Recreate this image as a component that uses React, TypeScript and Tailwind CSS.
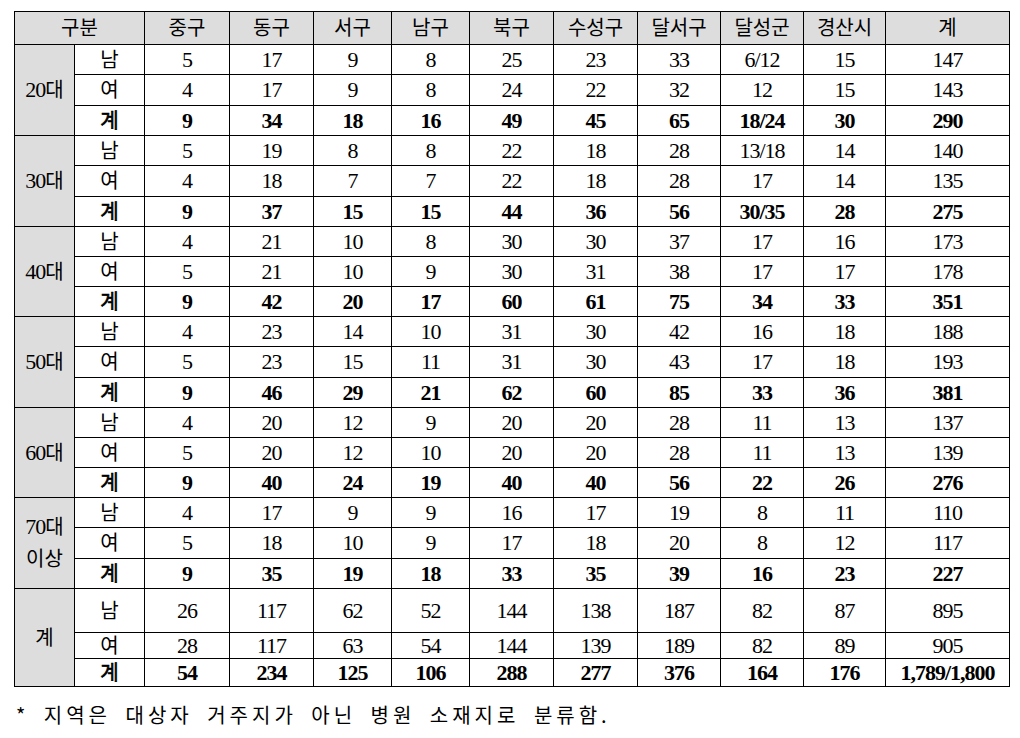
import React from "react";

type Group = {
  label: React.ReactNode;
  rows: { sex: string; values: string[]; h: number }[];
};

const columns = ["중구", "동구", "서구", "남구", "북구", "수성구", "달서구", "달성군", "경산시", "계"];
const widths = [60, 70, 85, 84, 78, 78, 84, 84, 83, 83, 82, 124];

const age = (n: string) => (
  <>
    {n}
    <span className="text-[20px] tracking-normal">대</span>
  </>
);

const groups: Group[] = [
  {
    label: age("20"),
    rows: [
      { sex: "남", h: 30, values: ["5", "17", "9", "8", "25", "23", "33", "6/12", "15", "147"] },
      { sex: "여", h: 31, values: ["4", "17", "9", "8", "24", "22", "32", "12", "15", "143"] },
      { sex: "계", h: 30, values: ["9", "34", "18", "16", "49", "45", "65", "18/24", "30", "290"] },
    ],
  },
  {
    label: age("30"),
    rows: [
      { sex: "남", h: 30, values: ["5", "19", "8", "8", "22", "18", "28", "13/18", "14", "140"] },
      { sex: "여", h: 31, values: ["4", "18", "7", "7", "22", "18", "28", "17", "14", "135"] },
      { sex: "계", h: 30, values: ["9", "37", "15", "15", "44", "36", "56", "30/35", "28", "275"] },
    ],
  },
  {
    label: age("40"),
    rows: [
      { sex: "남", h: 30, values: ["4", "21", "10", "8", "30", "30", "37", "17", "16", "173"] },
      { sex: "여", h: 30, values: ["5", "21", "10", "9", "30", "31", "38", "17", "17", "178"] },
      { sex: "계", h: 30, values: ["9", "42", "20", "17", "60", "61", "75", "34", "33", "351"] },
    ],
  },
  {
    label: age("50"),
    rows: [
      { sex: "남", h: 30, values: ["4", "23", "14", "10", "31", "30", "42", "16", "18", "188"] },
      { sex: "여", h: 31, values: ["5", "23", "15", "11", "31", "30", "43", "17", "18", "193"] },
      { sex: "계", h: 30, values: ["9", "46", "29", "21", "62", "60", "85", "33", "36", "381"] },
    ],
  },
  {
    label: age("60"),
    rows: [
      { sex: "남", h: 30, values: ["4", "20", "12", "9", "20", "20", "28", "11", "13", "137"] },
      { sex: "여", h: 30, values: ["5", "20", "12", "10", "20", "20", "28", "11", "13", "139"] },
      { sex: "계", h: 30, values: ["9", "40", "24", "19", "40", "40", "56", "22", "26", "276"] },
    ],
  },
  {
    label: (
      <>
        {age("70")}
        <br />
        <span className="text-[20px] tracking-normal">이상</span>
      </>
    ),
    rows: [
      { sex: "남", h: 30, values: ["4", "17", "9", "9", "16", "17", "19", "8", "11", "110"] },
      { sex: "여", h: 31, values: ["5", "18", "10", "9", "17", "18", "20", "8", "12", "117"] },
      { sex: "계", h: 30, values: ["9", "35", "19", "18", "33", "35", "39", "16", "23", "227"] },
    ],
  },
  {
    label: <span className="text-[20px] tracking-normal">계</span>,
    rows: [
      { sex: "남", h: 44, values: ["26", "117", "62", "52", "144", "138", "187", "82", "87", "895"] },
      { sex: "여", h: 26, values: ["28", "117", "63", "54", "144", "139", "189", "82", "89", "905"] },
      { sex: "계", h: 28, values: ["54", "234", "125", "106", "288", "277", "376", "164", "176", "1,789/1,800"] },
    ],
  },
];

const base = "border border-black p-0 text-center align-middle";
const cell = `${base} leading-none`;

export default function App() {
  return (
    <div className="min-h-screen bg-white pl-[14px] pt-[11px] font-['Liberation_Serif','Noto_Sans_CJK_KR',serif] text-black">
      <table className="w-[996px] table-fixed border-collapse">
        <colgroup>
          {widths.map((w, i) => (
            <col key={i} style={{ width: w }} />
          ))}
        </colgroup>
        <thead>
          <tr className="h-[33px] bg-[#dddddd]">
            <th colSpan={2} className={`${cell} text-[20px] font-normal`}>
              구분
            </th>
            {columns.map((c) => (
              <th key={c} className={`${cell} text-[20px] font-normal`}>
                {c}
              </th>
            ))}
          </tr>
        </thead>
        <tbody>
          {groups.map((g, gi) =>
            g.rows.map((r, ri) => {
              const total = r.sex === "계";
              return (
                <tr key={`${gi}-${ri}`} style={{ height: r.h }}>
                  {ri === 0 && (
                    <td
                      rowSpan={3}
                      className={`${base} bg-[#dddddd] text-[22px] leading-[32px] tracking-[-1px]`}
                    >
                      {g.label}
                    </td>
                  )}
                  <td
                    className={`${cell} text-[20px] ${total ? "[-webkit-text-stroke:0.6px_black]" : ""}`}
                  >
                    {r.sex}
                  </td>
                  {r.values.map((v, vi) => (
                    <td
                      key={vi}
                      className={`${cell} text-[22px] tracking-[-1px] ${total ? "font-bold" : ""}`}
                    >
                      {v}
                    </td>
                  ))}
                </tr>
              );
            })
          )}
        </tbody>
      </table>
      <p className="mt-[17px] pl-[2px] text-[20px] leading-[22px] tracking-[4px] [word-spacing:6px] font-['Noto_Sans_CJK_KR',sans-serif]">
        * 지역은 대상자 거주지가 아닌 병원 소재지로 분류함.
      </p>
    </div>
  );
}
